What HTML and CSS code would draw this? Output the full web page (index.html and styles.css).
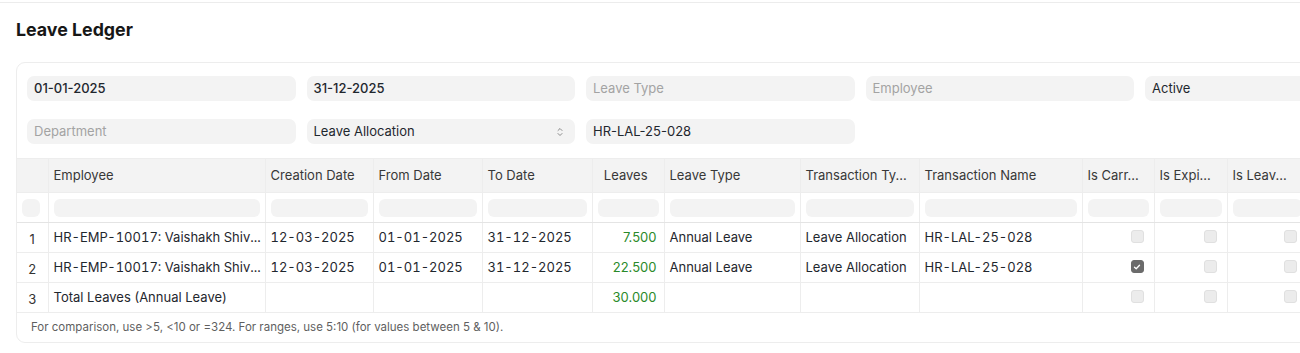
FILE: index.html
```html
<!DOCTYPE html>
<html lang="en">
<head>
    <meta charset="UTF-8">
    <meta name="viewport" content="width=device-width, initial-scale=1.0">
    <title>Leave Ledger</title>
    <link rel="stylesheet" href="styles.css">
</head>
<body>

    <div class="topbar"></div>

    <div class="page-head">
        <h2 class="title">Leave Ledger</h2>
    </div>

    <div class="card">
        <!-- Filters -->
        <div class="filters">
            <div class="field value strong">01-01-2025</div>
            <div class="field value strong">31-12-2025</div>
            <div class="field placeholder">Leave Type</div>
            <div class="field placeholder">Employee</div>
            <div class="field value">Active</div>

            <div class="field placeholder">Department</div>
            <div class="field value select">
                Leave Allocation
                <svg class="chevrons" width="8" height="10" viewBox="0 0 8 10">
                    <path d="M2 3.5 L4 1.5 L6 3.5" fill="none" stroke="#8a8a8a" stroke-width="1" stroke-linecap="round" stroke-linejoin="round"/>
                    <path d="M2 6.5 L4 8.5 L6 6.5" fill="none" stroke="#8a8a8a" stroke-width="1" stroke-linecap="round" stroke-linejoin="round"/>
                </svg>
            </div>
            <div class="field value">HR-LAL-25-028</div>
        </div>

        <!-- Report table -->
        <table class="report">
            <colgroup>
                <col style="width: 31px">
                <col style="width: 217px">
                <col style="width: 108px">
                <col style="width: 109px">
                <col style="width: 110px">
                <col style="width: 72px">
                <col style="width: 136px">
                <col style="width: 119px">
                <col style="width: 163px">
                <col style="width: 72px">
                <col style="width: 73px">
                <col style="width: 80px">
            </colgroup>
            <thead>
                <tr class="head-row">
                    <th></th>
                    <th>Employee</th>
                    <th>Creation Date</th>
                    <th>From Date</th>
                    <th>To Date</th>
                    <th class="num">Leaves</th>
                    <th>Leave Type</th>
                    <th>Transaction Ty...</th>
                    <th>Transaction Name</th>
                    <th>Is Carr...</th>
                    <th>Is Expi...</th>
                    <th>Is Leav...</th>
                </tr>
                <tr class="filter-row">
                    <td><div class="dot"></div></td>
                    <td><div class="mini"></div></td>
                    <td><div class="mini"></div></td>
                    <td><div class="mini"></div></td>
                    <td><div class="mini"></div></td>
                    <td><div class="mini"></div></td>
                    <td><div class="mini"></div></td>
                    <td><div class="mini"></div></td>
                    <td><div class="mini"></div></td>
                    <td><div class="mini"></div></td>
                    <td><div class="mini"></div></td>
                    <td><div class="mini"></div></td>
                </tr>
            </thead>
            <tbody>
                <tr>
                    <td class="idx"><span>1</span></td>
                    <td class="mono">HR-EMP-10017: Vaishakh Shiv...</td>
                    <td class="mono">12-03-2025</td>
                    <td class="mono">01-01-2025</td>
                    <td class="mono">31-12-2025</td>
                    <td class="num green">7.500</td>
                    <td>Annual Leave</td>
                    <td>Leave Allocation</td>
                    <td class="mono">HR-LAL-25-028</td>
                    <td class="check"><span class="box"></span></td>
                    <td class="check"><span class="box"></span></td>
                    <td class="check"><span class="box"></span></td>
                </tr>
                <tr>
                    <td class="idx"><span>2</span></td>
                    <td class="mono">HR-EMP-10017: Vaishakh Shiv...</td>
                    <td class="mono">12-03-2025</td>
                    <td class="mono">01-01-2025</td>
                    <td class="mono">31-12-2025</td>
                    <td class="num green">22.500</td>
                    <td>Annual Leave</td>
                    <td>Leave Allocation</td>
                    <td class="mono">HR-LAL-25-028</td>
                    <td class="check">
                        <span class="box checked">
                            <svg width="8" height="8" viewBox="0 0 8 8"><path d="M1.5 4.2 L3.2 5.8 L6.5 2.2" fill="none" stroke="#fff" stroke-width="1.3" stroke-linecap="round" stroke-linejoin="round"/></svg>
                        </span>
                    </td>
                    <td class="check"><span class="box"></span></td>
                    <td class="check"><span class="box"></span></td>
                </tr>
                <tr>
                    <td class="idx"><span>3</span></td>
                    <td>Total Leaves (Annual Leave)</td>
                    <td></td>
                    <td></td>
                    <td></td>
                    <td class="num green">30.000</td>
                    <td></td>
                    <td></td>
                    <td></td>
                    <td class="check"><span class="box"></span></td>
                    <td class="check"><span class="box"></span></td>
                    <td class="check"><span class="box"></span></td>
                </tr>
            </tbody>
        </table>

        <p class="hint">For comparison, use &gt;5, &lt;10 or =324. For ranges, use 5:10 (for values between 5 &amp; 10).</p>
    </div>

</body>
</html>
```

FILE: styles.css
```css
/* General */
body {
    font-family: Inter, "Noto Sans", sans-serif;
    color: #1f272e;
    background: #ffffff;
    margin: 0;
    padding: 0;
    overflow: hidden;
}

/* Top bar edge */
.topbar {
    height: 2px;
    border-bottom: 1px solid #ececec;
}

/* Page heading */
.page-head {
    padding: 15px 16px 0;
    height: 44px;
}

.title {
    margin: 0;
    font-size: 17.8px;
    line-height: 24px;
    font-weight: 700;
    color: #171717;
}

/* Card */
.card {
    margin-left: 16px;
    width: 1420px;
    border: 1px solid #ededed;
    border-radius: 9px;
}

/* Filters */
.filters {
    display: grid;
    grid-template-columns: repeat(5, 268.5px);
    column-gap: 11px;
    row-gap: 18px;
    padding: 13px 10px 14px;
}

.field {
    position: relative;
    height: 25px;
    line-height: 25px;
    padding: 0 7px;
    background: #f3f3f3;
    border-radius: 7px;
    font-size: 13px;
}

.value {
    color: #1f272e;
}

.strong {
    font-weight: 500;
}

.placeholder {
    color: #a3a3a3;
}

.select .chevrons {
    position: absolute;
    right: 11px;
    top: 8px;
}

/* Report table */
.report {
    width: 1290px;
    border-collapse: collapse;
    table-layout: fixed;
    font-size: 13px;
}

.report th,
.report td {
    border-right: 1px solid #ededed;
    border-bottom: 1px solid #ededed;
    padding: 0 5px;
    white-space: nowrap;
    overflow: hidden;
    line-height: 16px;
}

.head-row th {
    height: 31px;
    padding-bottom: 2px;
    background: #f3f3f3;
    border-top: 1px solid #ededed;
    font-weight: 400;
    color: #383838;
    text-align: left;
}

.filter-row td {
    height: 29px;
    border-bottom: 1px solid #e4e4e4;
}

.mini {
    height: 18px;
    background: #f3f3f3;
    border-radius: 6px;
}

.dot {
    width: 18px;
    height: 18px;
    background: #f3f3f3;
    border-radius: 6px;
}

.report tbody td {
    height: 27px;
    padding-bottom: 2px;
}

.report td.idx {
    text-align: center;
    color: #333;
}

.idx span {
    position: relative;
    top: 2px;
}

.mono {
    font-variant-numeric: tabular-nums;
    font-feature-settings: "tnum" 1, "case" 1;
}

.report td.num {
    text-align: right;
    padding-right: 7px;
}

.report .head-row th.num {
    text-align: right;
    padding-right: 16px;
}

.green {
    color: #2a8a2a;
}

.report td.check {
    text-align: right;
    padding-right: 10px;
}

.box {
    display: inline-block;
    width: 11px;
    height: 11px;
    background: #ececec;
    border: 1px solid #e0e0e0;
    border-radius: 3px;
    vertical-align: middle;
    position: relative;
    top: -1px;
}

.box.checked {
    background: #6b6b6b;
    border-color: #6b6b6b;
}

.box svg {
    display: block;
    margin: 1.5px auto 0;
}

/* Hint */
.hint {
    margin: 0;
    padding: 0 14px;
    height: 29px;
    line-height: 28px;
    font-size: 11.5px;
    color: #5f5f5f;
}
```
